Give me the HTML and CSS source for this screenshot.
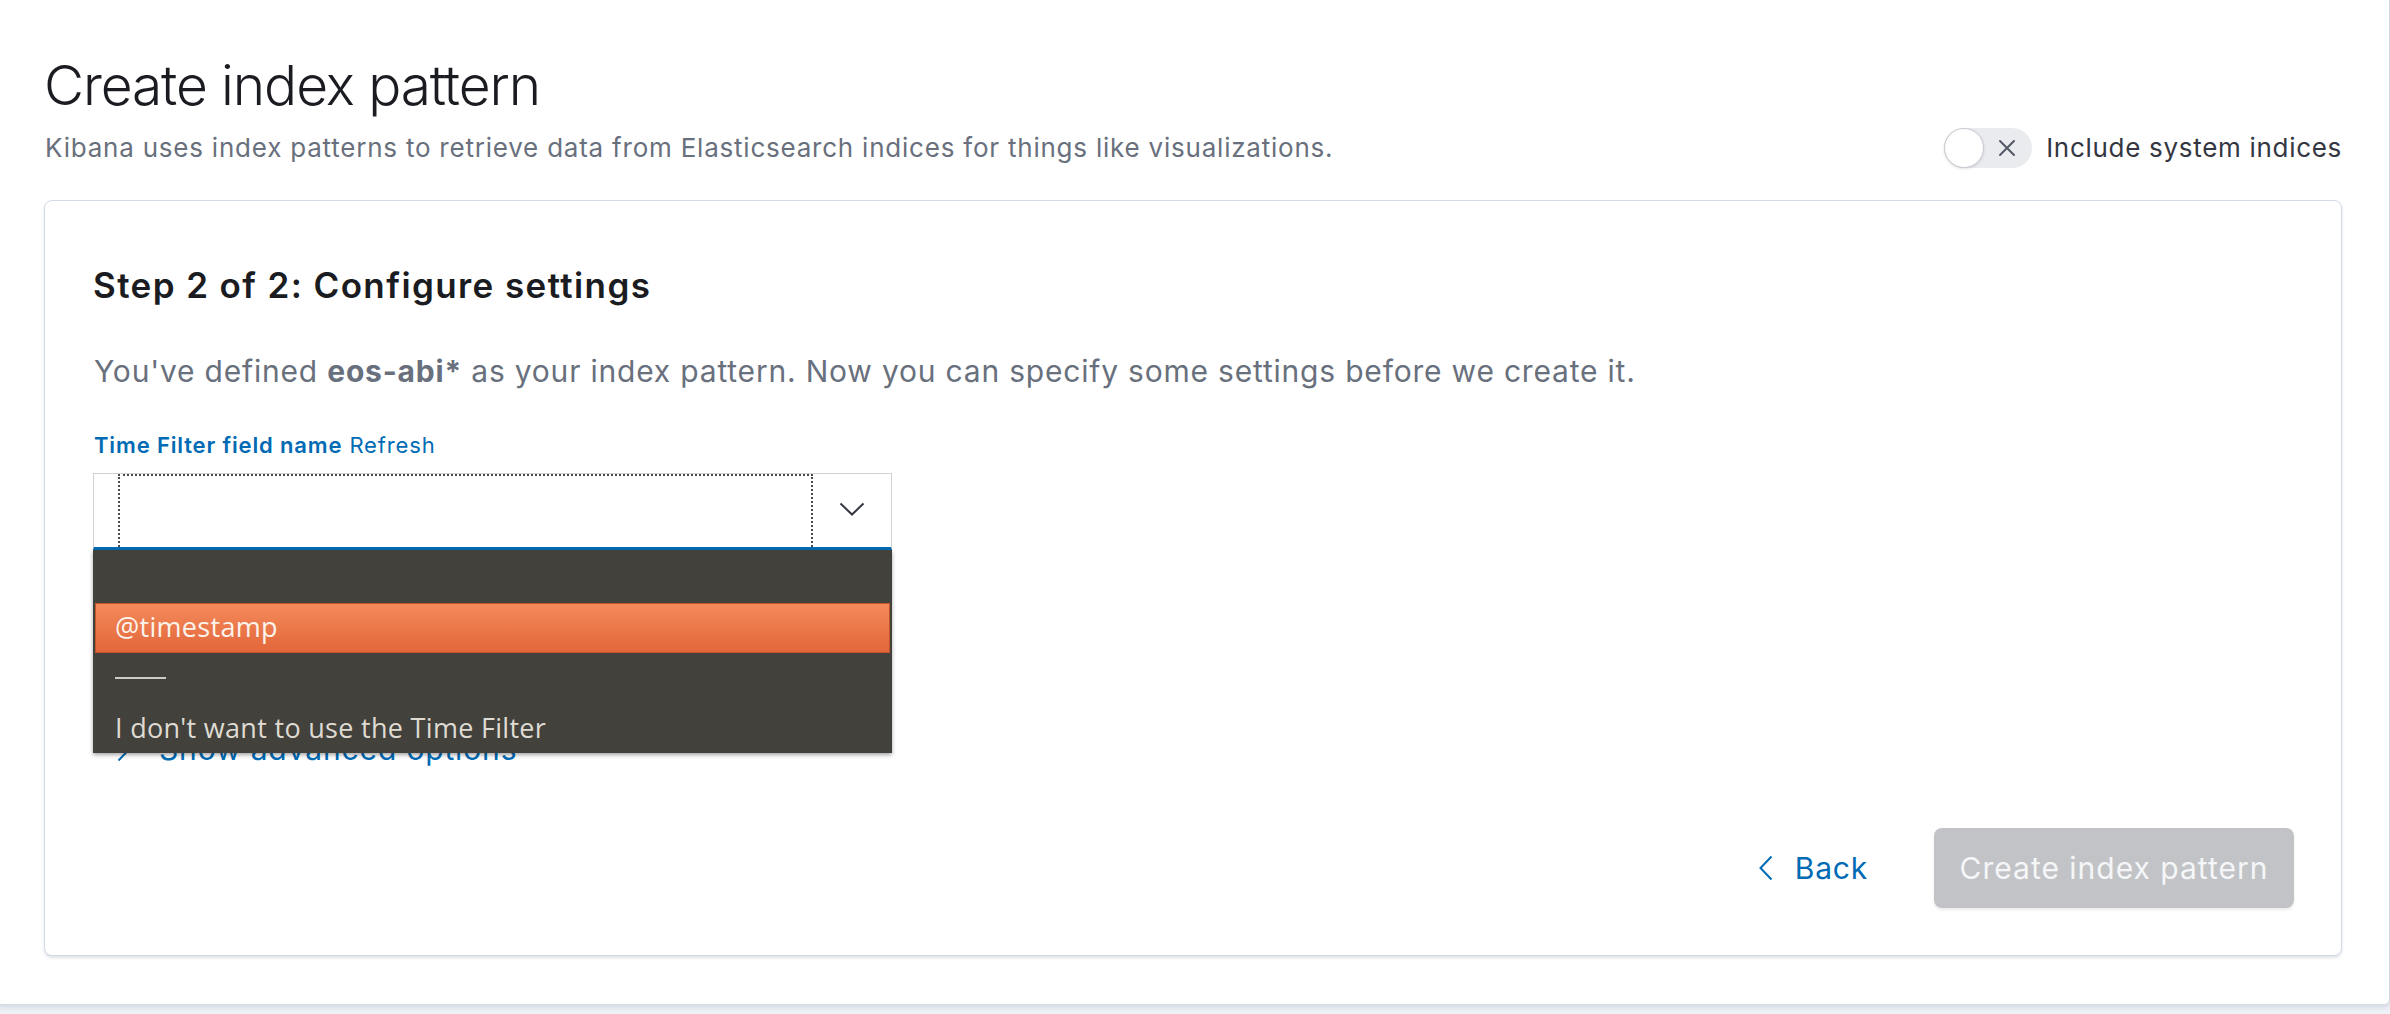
FILE: index.html
```html
<!DOCTYPE html>
<html lang="en">
<head>
<meta charset="utf-8">
<title>Create index pattern</title>
<link rel="stylesheet" href="styles.css">
</head>
<body>
<div class="page">
  <header class="header">
    <div class="heading">
      <h1 class="title">Create index pattern</h1>
      <p class="subtitle">Kibana uses index patterns to retrieve data from Elasticsearch indices for things like visualizations.</p>
    </div>
    <div class="switch">
      <span class="switch-track">
        <span class="switch-knob"></span>
        <svg class="switch-x" viewBox="0 0 20 20" width="20" height="20"><path d="M3 3 L17 17 M17 3 L3 17" stroke="#535966" stroke-width="2" fill="none" stroke-linecap="round"/></svg>
      </span>
      <span class="switch-label">Include system indices</span>
    </div>
  </header>

  <section class="card">
    <h2 class="step-title">Step 2 of 2: Configure settings</h2>
    <p class="desc">You've defined <strong>eos-abi*</strong> as your index pattern. Now you can specify some settings before we create it.</p>

    <div class="field">
      <div class="field-label"><span class="label-strong">Time Filter field name</span> <span class="refresh">Refresh</span></div>
      <div class="select-wrap">
        <div class="select">
          <div class="focus-ring"></div>
          <div class="select-arrow">
            <svg viewBox="0 0 26 14" width="26" height="14"><path d="M1.5 1.5 L13 12.5 L24.5 1.5" stroke="#343741" stroke-width="2" fill="none"/></svg>
          </div>
        </div>
        <ul class="menu">
          <li class="menu-item"></li>
          <li class="menu-item is-active">@timestamp</li>
          <li class="menu-item menu-sep"><span class="sep-line"></span></li>
          <li class="menu-item">I don't want to use the Time Filter</li>
        </ul>
      </div>
    </div>

    <div class="advanced">
      <svg viewBox="0 0 14 26" width="14" height="26"><path d="M1.5 1.5 L12.5 13 L1.5 24.5" stroke="#006bb4" stroke-width="2" fill="none"/></svg>
      <span>Show advanced options</span>
    </div>

    <div class="actions">
      <button class="btn-back" type="button">
        <svg viewBox="0 0 14 26" width="14" height="26"><path d="M12.5 1.5 L1.5 13 L12.5 24.5" stroke="#006bb4" stroke-width="2" fill="none"/></svg>
        <span>Back</span>
      </button>
      <button class="btn-create" type="button">Create index pattern</button>
    </div>
  </section>
</div>
</body>
</html>
```
FILE: styles.css
```css
* { box-sizing: border-box; }

html, body {
  margin: 0;
  padding: 0;
}

body {
  background: #eef1f6;
  font-family: "Inter", "Liberation Sans", sans-serif;
  color: #343741;
  height: 1014px;
  overflow: hidden;
}

.page {
  height: 1006px;
  background: #ffffff;
  border-right: 1px solid #d3dae6;
  border-bottom: 2px solid #d8dee9;
  border-bottom-right-radius: 6px;
  box-shadow: 0 2px 4px rgba(152, 162, 179, 0.25);
  padding: 52px 47px 0 44px;
}

/* Header */
.header {
  display: flex;
  justify-content: space-between;
  align-items: flex-end;
}

.title {
  margin: 0;
  font-size: 55px;
  line-height: 66px;
  font-weight: 300;
  color: #1a1c21;
  letter-spacing: -1.1px;
}

.subtitle {
  margin: 10px 0 0 1px;
  font-size: 26px;
  line-height: 40px;
  color: #69707d;
  letter-spacing: 0.78px;
}

.switch {
  display: flex;
  align-items: center;
  gap: 14px;
}

.switch-track {
  position: relative;
  display: flex;
  align-items: center;
  width: 88px;
  height: 40px;
  border-radius: 20px;
  background: #e9ebef;
}

.switch-knob {
  width: 40px;
  height: 40px;
  border-radius: 50%;
  background: #ffffff;
  border: 1.5px solid #c8cbd1;
  box-shadow: 0 1px 3px rgba(0, 0, 0, 0.12);
}

.switch-x {
  margin-left: 13px;
}

.switch-label {
  font-size: 26px;
  line-height: 40px;
  color: #343741;
  letter-spacing: 0.7px;
}

/* Card */
.card {
  margin-top: 32px;
  height: 756px;
  background: #ffffff;
  border: 1px solid #d3dae6;
  border-radius: 8px;
  box-shadow: 0 2px 3px rgba(152, 162, 179, 0.3);
  padding: 64px 47px 47px 48px;
  display: flex;
  flex-direction: column;
}

.step-title {
  margin: 0;
  font-size: 35px;
  line-height: 40px;
  font-weight: 600;
  color: #1a1c21;
  letter-spacing: 1.4px;
}

.desc {
  margin: 44px 0 0 1px;
  font-size: 30px;
  line-height: 44px;
  color: #69707d;
  letter-spacing: 0.8px;
}

.desc strong {
  font-weight: 700;
  color: #69707d;
}

.field {
  margin-top: 38px;
}

.field-label {
  font-size: 22px;
  line-height: 28px;
  color: #006bb4;
  margin-left: 1px;
  letter-spacing: 0.85px;
}

.label-strong {
  font-weight: 600;
}

.select-wrap {
  position: relative;
  margin-top: 14px;
  width: 799px;
}

.select {
  display: flex;
  height: 77px;
  background: #ffffff;
  border: 1px solid #d2d2d2;
  border-bottom: 3px solid #006bb4;
  padding-left: 24px;
}

.focus-ring {
  width: 695px;
  border: 2px dotted #4a4a4a;
  border-bottom: none;
}

.select-arrow {
  flex: 1;
  display: flex;
  align-items: center;
  justify-content: center;
  padding-bottom: 4px;
}

.menu {
  position: absolute;
  top: 77px;
  left: 0;
  right: 0;
  margin: 0;
  padding: 3px 2px 0;
  list-style: none;
  background: #43413c;
  box-shadow: 0 2px 4px rgba(0, 0, 0, 0.35);
  font-family: "Open Sans", "Noto Sans", sans-serif;
  font-size: 27px;
  color: #dfdbd2;
  z-index: 2;
}

.menu-item {
  height: 50px;
  line-height: 50px;
  padding-left: 20px;
  letter-spacing: 0.3px;
  white-space: nowrap;
}

.menu-item.is-active {
  background: linear-gradient(#f48a5a, #e2663a);
  border: 1px solid #c2532c;
  color: #fbf3ec;
  line-height: 46px;
  padding-left: 19px;
}

.menu-sep {
  display: flex;
  align-items: center;
}

.sep-line {
  display: block;
  width: 51px;
  height: 2px;
  background: #cfcbc3;
}

.advanced {
  display: flex;
  align-items: center;
  gap: 28px;
  margin-top: 177px;
  padding-left: 24px;
  height: 44px;
  font-size: 30px;
  color: #006bb4;
  letter-spacing: 0.85px;
}

.actions {
  margin-top: auto;
  display: flex;
  justify-content: flex-end;
  align-items: center;
  gap: 66px;
}

.btn-back {
  display: flex;
  align-items: center;
  gap: 22px;
  background: none;
  border: none;
  padding: 0;
  font-family: "Inter", "Liberation Sans", sans-serif;
  font-size: 30px;
  color: #006bb4;
  letter-spacing: 0.8px;
}

.btn-create {
  width: 360px;
  height: 80px;
  border: none;
  border-radius: 8px;
  background: #c2c3c6;
  box-shadow: 0 2px 3px rgba(0, 0, 0, 0.08);
  color: #f5f6f8;
  font-family: "Inter", "Liberation Sans", sans-serif;
  font-size: 30px;
  letter-spacing: 1px;
}
```
